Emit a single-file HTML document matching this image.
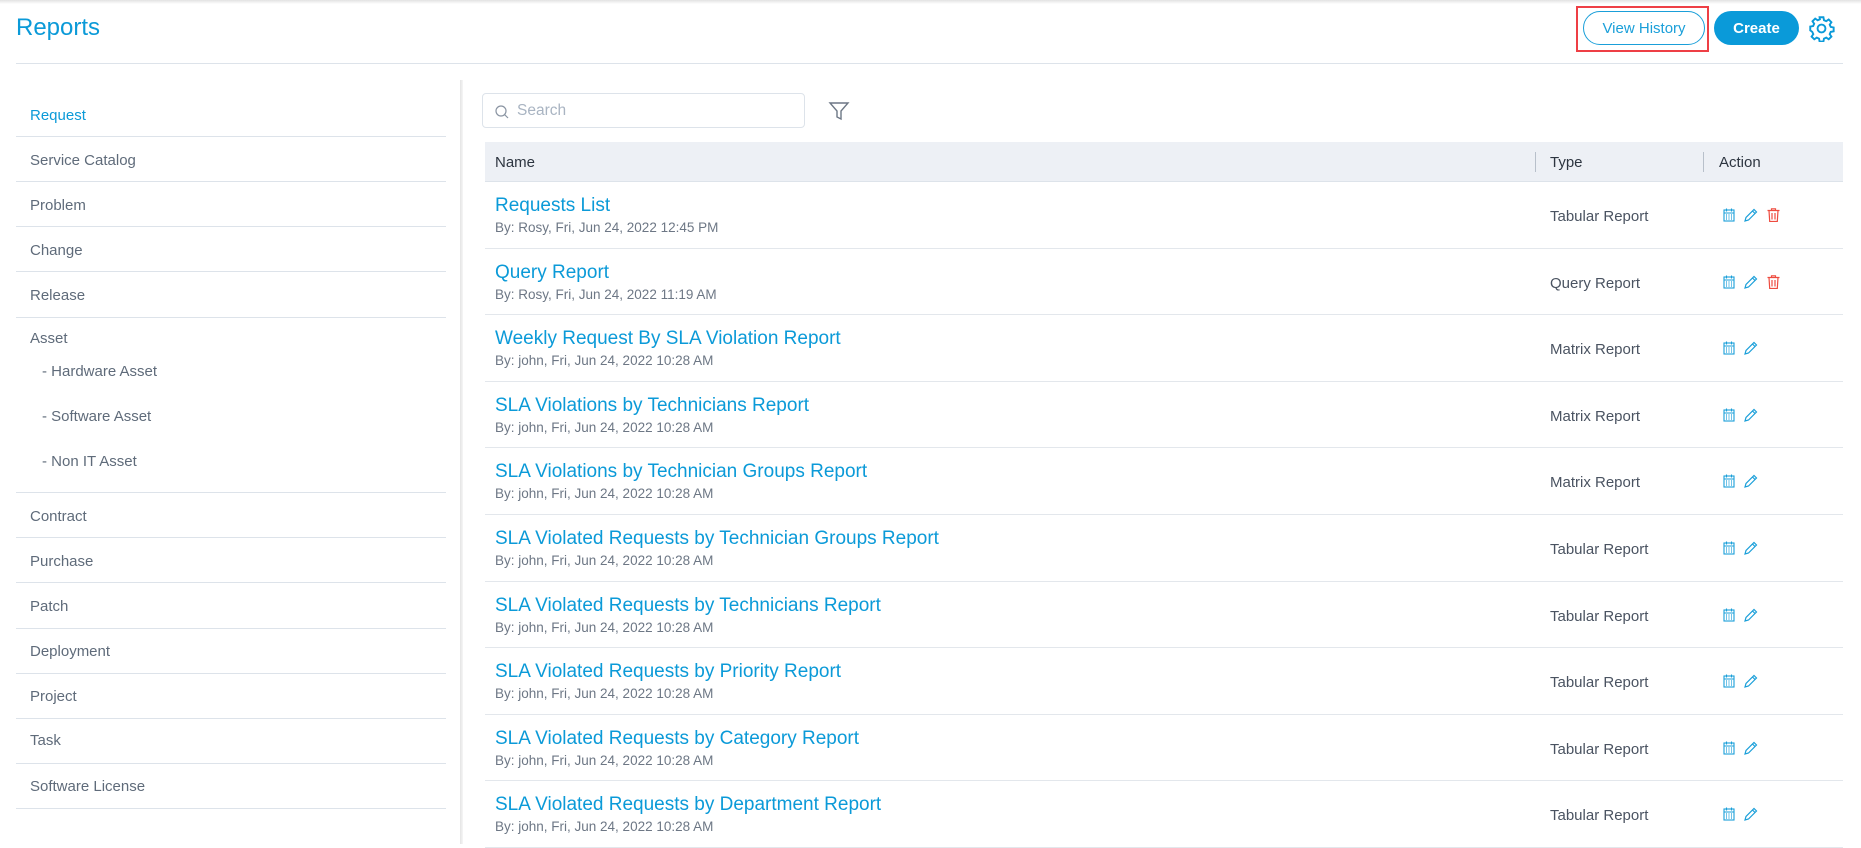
<!DOCTYPE html>
<html><head><meta charset="utf-8"><style>
*{margin:0;padding:0;box-sizing:border-box}
body{width:1861px;height:844px;overflow:hidden;background:#fff;font-family:"Liberation Sans",sans-serif;position:relative}
.a{position:absolute}
.topsh{left:0;top:0;width:1861px;height:4px;background:linear-gradient(#e2e2e2,#fff)}
.title{left:16px;top:14px;font-size:24px;color:#0b9ad8}
.hl{left:16px;top:63px;width:1827px;height:1px;background:#dde3ea}
.vh{left:1583px;top:11px;width:122px;height:34px;border:1px solid #1a9fd9;border-radius:17px;color:#1a9fd9;font-size:15px;text-align:center;line-height:34px}
.red{left:1576px;top:6px;width:133px;height:46px;border:2px solid #ee3f45}
.cr{left:1714px;top:11px;width:85px;height:34px;background:#0a9ad9;border-radius:17px;color:#fff;font-size:15px;font-weight:bold;text-align:center;line-height:36px}
.side{color:#5f6b7a;font-size:15px}
.sl{left:16px;width:430px;height:1px;background:#dde3ea}
.vline{left:460px;top:80px;width:3px;height:764px;background:linear-gradient(90deg,#e4e4e4,#f6f6f6)}
.search{left:482px;top:93px;width:323px;height:35px;border:1px solid #dde3ea;border-radius:4px}
.th{left:485px;top:142px;width:1358px;height:40px;background:#edf0f5;border-bottom:1px solid #dde3ea;font-size:15px;color:#2d3540}
.row{left:485px;width:1358px;height:66.5px;border-bottom:1px solid #e3e7ec}
.row .t{position:absolute;left:10px;top:13px;font-size:19px;color:#0b9ad8;white-space:nowrap}
.row .d{position:absolute;left:10px;top:38px;font-size:13.5px;color:#6d7785;white-space:nowrap}
.row .ty{position:absolute;left:65px;top:26px;font-size:15px;color:#4a5361;margin-left:1000px}
.row svg{position:absolute;top:26px}
</style></head><body>
<div class="a topsh"></div>
<div class="a title">Reports</div>
<div class="a hl"></div>
<div class="a vh">View History</div>
<div class="a red"></div>
<div class="a cr">Create</div>
<svg class="a" style="left:1808px;top:15px" width="27" height="27" viewBox="0 0 24 24" fill="none" stroke="#0a9ad9" stroke-width="1.7"><circle cx="12" cy="12" r="3.5"/><path d="M10.3 2h3.4l.5 2.6 2 .9 2.2-1.5 2.4 2.4-1.5 2.2.9 2 2.6.5v3.4l-2.6.5-.9 2 1.5 2.2-2.4 2.4-2.2-1.5-2 .9-.5 2.6h-3.4l-.5-2.6-2-.9-2.2 1.5-2.4-2.4 1.5-2.2-.9-2L2 13.7v-3.4l2.6-.5.9-2L4 5.6 6.4 3.2l2.2 1.5 2-.9z"/></svg>

<div class="a side" style="left:30px;top:107px;color:#0b9ad8">Request</div>
<div class="a sl" style="top:136px"></div>
<div class="a side" style="left:30px;top:152px">Service Catalog</div>
<div class="a sl" style="top:181px"></div>
<div class="a side" style="left:30px;top:197px">Problem</div>
<div class="a sl" style="top:226px"></div>
<div class="a side" style="left:30px;top:242px">Change</div>
<div class="a sl" style="top:271px"></div>
<div class="a side" style="left:30px;top:287px">Release</div>
<div class="a sl" style="top:317px"></div>
<div class="a side" style="left:30px;top:330px">Asset</div>
<div class="a side" style="left:42px;top:363px">- Hardware Asset</div>
<div class="a side" style="left:42px;top:408px">- Software Asset</div>
<div class="a side" style="left:42px;top:453px">- Non IT Asset</div>
<div class="a sl" style="top:492px"></div>
<div class="a side" style="left:30px;top:508px">Contract</div>
<div class="a sl" style="top:537px"></div>
<div class="a side" style="left:30px;top:553px">Purchase</div>
<div class="a sl" style="top:582px"></div>
<div class="a side" style="left:30px;top:598px">Patch</div>
<div class="a sl" style="top:628px"></div>
<div class="a side" style="left:30px;top:643px">Deployment</div>
<div class="a sl" style="top:673px"></div>
<div class="a side" style="left:30px;top:688px">Project</div>
<div class="a sl" style="top:718px"></div>
<div class="a side" style="left:30px;top:732px">Task</div>
<div class="a sl" style="top:763px"></div>
<div class="a side" style="left:30px;top:778px">Software License</div>
<div class="a sl" style="top:808px"></div>

<div class="a vline"></div>
<div class="a search"></div>
<svg class="a" style="left:494px;top:104px" width="16" height="16" viewBox="0 0 16 16" fill="none" stroke="#8a94a2" stroke-width="1.2"><circle cx="7" cy="7" r="5"/><path d="M10.5 10.5l3.5 3.5"/></svg>
<div class="a" style="left:517px;top:102px;font-size:15.5px;color:#a9b4c2">Search</div>
<svg class="a" style="left:828px;top:100px" width="22" height="22" viewBox="0 0 22 22" fill="none" stroke="#6d7785" stroke-width="1.4"><path d="M2 3h18l-7 8v8l-4-2v-6z"/></svg>

<div class="a th"><span class="a" style="left:10px;top:12px">Name</span><span class="a" style="left:1050px;top:10px;width:1px;height:20px;background:#b8c0ca"></span><span class="a" style="left:1065px;top:12px">Type</span><span class="a" style="left:1218px;top:10px;width:1px;height:20px;background:#b8c0ca"></span><span class="a" style="left:1234px;top:12px">Action</span></div>

<div id="rows"></div>
<script>
var R=[["Requests List","By: Rosy, Fri, Jun 24, 2022 12:45 PM","Tabular Report",1],
["Query Report","By: Rosy, Fri, Jun 24, 2022 11:19 AM","Query Report",1],
["Weekly Request By SLA Violation Report","By: john, Fri, Jun 24, 2022 10:28 AM","Matrix Report",0],
["SLA Violations by Technicians Report","By: john, Fri, Jun 24, 2022 10:28 AM","Matrix Report",0],
["SLA Violations by Technician Groups Report","By: john, Fri, Jun 24, 2022 10:28 AM","Matrix Report",0],
["SLA Violated Requests by Technician Groups Report","By: john, Fri, Jun 24, 2022 10:28 AM","Tabular Report",0],
["SLA Violated Requests by Technicians Report","By: john, Fri, Jun 24, 2022 10:28 AM","Tabular Report",0],
["SLA Violated Requests by Priority Report","By: john, Fri, Jun 24, 2022 10:28 AM","Tabular Report",0],
["SLA Violated Requests by Category Report","By: john, Fri, Jun 24, 2022 10:28 AM","Tabular Report",0],
["SLA Violated Requests by Department Report","By: john, Fri, Jun 24, 2022 10:28 AM","Tabular Report",0]];
var cal='<svg style="left:1238px" width="12" height="14" viewBox="0 0 12 14" fill="none" stroke="#1a9fd9" stroke-width="1.1"><rect x="1" y="2" width="10" height="11"/><path d="M1 5h10M3.5 0.5v3M8.5 0.5v3"/><path d="M3 7h1M5.5 7h1M8 7h1M3 9h1M5.5 9h1M8 9h1M3 11h1M5.5 11h1M8 11h1" stroke-width="1.2"/></svg>';
var pen='<svg style="left:1259px" width="14" height="14" viewBox="0 0 14 14" fill="none" stroke="#1a9fd9" stroke-width="1.2"><path d="M1 13l1-3.5L10 1.5l2.5 2.5-8 8zM8.5 3l2.5 2.5"/></svg>';
var tr='<svg style="left:1282px" width="13" height="14" viewBox="0 0 13 14" fill="none" stroke="#ee4b3f" stroke-width="1.2"><path d="M0.5 2.5h12M4.5 2.5V0.8h4v1.7M2 2.5l.7 11h7.6l.7-11M5 5v6.5M8 5v6.5"/></svg>';
var h='';
R.forEach(function(r,i){h+='<div class="a row" style="top:'+(182+i*56.1*1.187).toFixed(1)+'px"><div class="t">'+r[0]+'</div><div class="d">'+r[1]+'</div><div class="ty">'+r[2]+'</div>'+cal+pen+(r[3]?tr:'')+'</div>';});
document.getElementById('rows').innerHTML=h;
</script>
</body></html>
